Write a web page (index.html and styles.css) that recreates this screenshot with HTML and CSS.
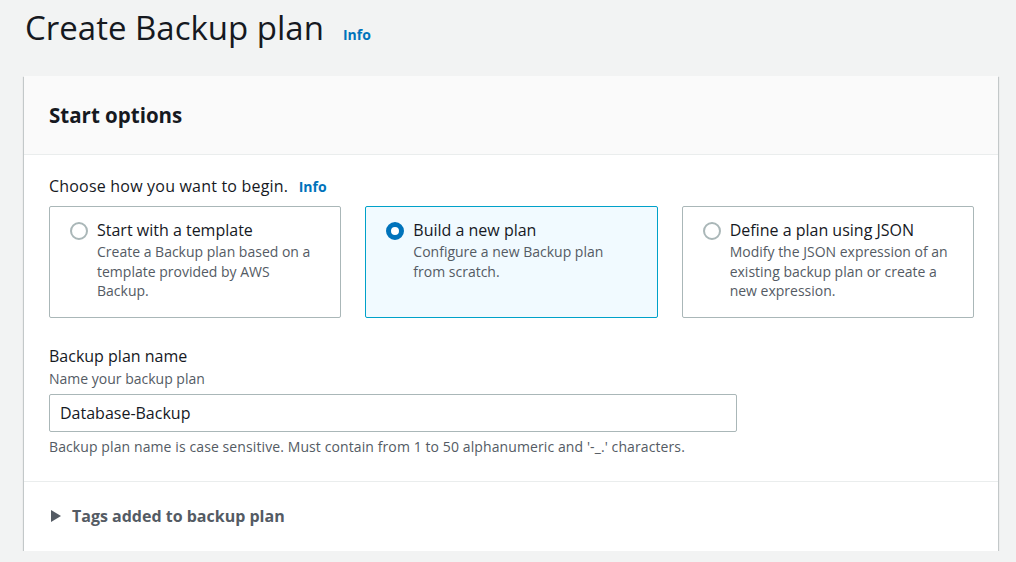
FILE: index.html
```html
<!DOCTYPE html>
<html lang="en">
<head>
    <meta charset="UTF-8">
    <title>Create Backup plan</title>
    <link rel="stylesheet" href="styles.css">
</head>
<body>
    <div class="page-head">
        <h1>Create Backup plan</h1>
        <a class="info" href="#">Info</a>
    </div>

    <div class="panel">
        <div class="panel-header">
            <h2>Start options</h2>
        </div>

        <div class="panel-body">
            <div class="field-label">Choose how you want to begin. <a class="info" href="#">Info</a></div>

            <div class="tiles">
                <label class="tile">
                    <span class="radio"></span>
                    <span class="tile-text">
                        <span class="tile-title">Start with a template</span>
                        <span class="tile-desc">Create a Backup plan based on a template provided by AWS Backup.</span>
                    </span>
                </label>
                <label class="tile selected">
                    <span class="radio checked"></span>
                    <span class="tile-text">
                        <span class="tile-title">Build a new plan</span>
                        <span class="tile-desc">Configure a new Backup plan from scratch.</span>
                    </span>
                </label>
                <label class="tile">
                    <span class="radio"></span>
                    <span class="tile-text">
                        <span class="tile-title">Define a plan using JSON</span>
                        <span class="tile-desc">Modify the JSON expression of an existing backup plan or create a new expression.</span>
                    </span>
                </label>
            </div>

            <div class="form-field">
                <div class="field-name">Backup plan name</div>
                <div class="field-hint">Name your backup plan</div>
                <input class="text-input" type="text" value="Database-Backup">
                <div class="field-hint constraint">Backup plan name is case sensitive. Must contain from 1 to 50 alphanumeric and '-_.' characters.</div>
            </div>
        </div>

        <div class="panel-footer">
            <span class="caret"></span>
            <span class="expand-title">Tags added to backup plan</span>
        </div>
    </div>
</body>
</html>
```

FILE: styles.css
```css
body {
    margin: 0;
    padding: 0 18px 0 24px;
    background: #f2f3f3;
    font-family: "Open Sans", "Noto Sans", sans-serif;
    color: #16191f;
}
a.info {
    color: #0073bb;
    font-weight: bold;
    font-size: 14px;
    text-decoration: none;
}
.page-head {
    display: flex;
    align-items: baseline;
    height: 76px;
}
.page-head h1 {
    margin: 0;
    padding-left: 1px;
    font-size: 33px;
    font-weight: normal;
    line-height: 56px;
}
.page-head .info {
    margin-left: 19px;
}
.panel {
    background: #fff;
    box-shadow: 0 1px 1px 0 rgba(0, 28, 36, 0.3), 1px 1px 1px 0 rgba(0, 28, 36, 0.15), -1px 1px 1px 0 rgba(0, 28, 36, 0.15);
}
.panel-header {
    background: #fafafa;
    border-bottom: 1px solid #eaeded;
    padding: 25px 25px 25px;
}
.panel-header h2 {
    margin: 0;
    font-size: 20.5px;
    line-height: 28px;
    font-weight: bold;
}
.panel-body {
    padding: 20px 24px 24px 25px;
    border-bottom: 1px solid #eaeded;
}
.field-label {
    font-size: 16px;
    line-height: 22px;
    letter-spacing: 0.2px;
}
.field-label .info {
    margin-left: 6px;
    letter-spacing: 0;
}
.tiles {
    display: grid;
    grid-template-columns: 1fr 1fr 1fr;
    gap: 24px;
    margin-top: 8px;
}
.tile {
    display: flex;
    height: 112px;
    box-sizing: border-box;
    padding: 12px 24px 0 20px;
    border: 1px solid #aab7b8;
    border-radius: 2px;
    background: #fff;
}
.tile.selected {
    border-color: #00a1c9;
    background: #f1faff;
}
.radio {
    flex: none;
    width: 14px;
    height: 14px;
    margin-top: 3px;
    margin-right: 9px;
    border: 2px solid #aab7b8;
    border-radius: 50%;
    background: #fff;
}
.radio.checked {
    border: 5px solid #0073bb;
    width: 8px;
    height: 8px;
}
.tile-text {
    display: flex;
    flex-direction: column;
}
.tile-title {
    font-size: 16px;
    line-height: 22px;
}
.tile-desc {
    margin-top: 1px;
    font-size: 14px;
    line-height: 19.5px;
    color: #545b64;
}
.form-field {
    margin-top: 27px;
}
.field-name {
    font-size: 16px;
    line-height: 22px;
}
.field-hint {
    font-size: 14px;
    line-height: 20px;
    color: #545b64;
    margin-top: 2px;
}
.text-input {
    display: block;
    box-sizing: border-box;
    width: 688px;
    height: 38px;
    margin-top: 5px;
    padding: 0 10px;
    border: 1px solid #aab7b8;
    border-radius: 2px;
    font-family: inherit;
    font-size: 16px;
    color: #16191f;
}
.field-hint.constraint {
    margin-top: 5px;
    letter-spacing: 0.1px;
}
.panel-footer {
    display: flex;
    align-items: center;
    padding: 23px 25px 24px 27px;
    height: 22px;
}
.caret {
    width: 0;
    height: 0;
    border-top: 6px solid transparent;
    border-bottom: 6px solid transparent;
    border-left: 10px solid #545b64;
    margin-right: 11px;
}
.expand-title {
    font-size: 16px;
    font-weight: bold;
    line-height: 22px;
    color: #545b64;
}
```
